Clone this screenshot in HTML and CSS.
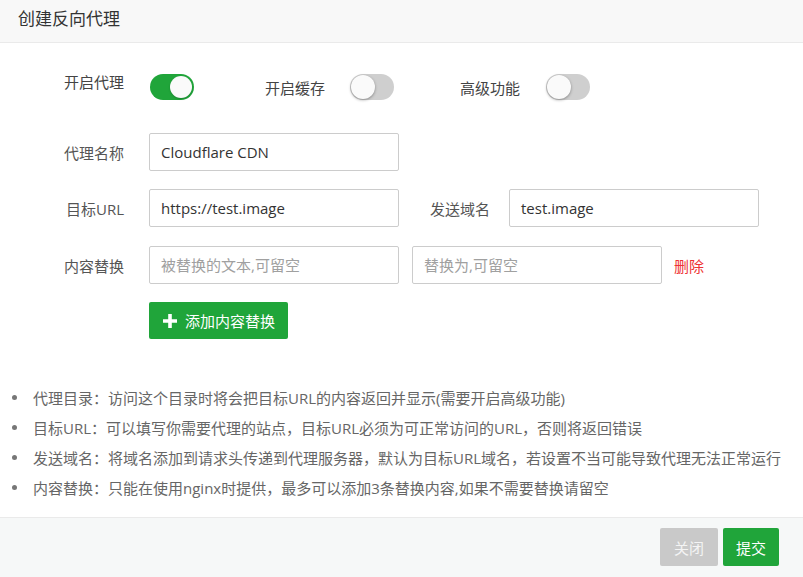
FILE: index.html
```html
<!DOCTYPE html>
<html lang="zh-CN">
<head>
<meta charset="utf-8">
<title>创建反向代理</title>
<link rel="stylesheet" href="styles.css">
</head>
<body>
<div class="dialog">
  <div class="header">创建反向代理</div>
  <div class="content">
    <div class="switch-row">
      <div class="sw-group g1">
        <span class="sw-label top">开启代理</span>
        <span class="toggle on"><span class="knob"></span></span>
      </div>
      <div class="sw-group g2">
        <span class="sw-label">开启缓存</span>
        <span class="toggle"><span class="knob"></span></span>
      </div>
      <div class="sw-group g3">
        <span class="sw-label">高级功能</span>
        <span class="toggle"><span class="knob"></span></span>
      </div>
    </div>
    <div class="form">
      <div class="row">
        <span class="label">代理名称</span>
        <div class="input">Cloudflare CDN</div>
      </div>
      <div class="row">
        <span class="label">目标URL</span>
        <div class="input">https://test.image</div>
        <span class="label2">发送域名</span>
        <div class="input">test.image</div>
      </div>
      <div class="row third">
        <span class="label">内容替换</span>
        <div class="input ph">被替换的文本,可留空</div>
        <div class="input ph second">替换为,可留空</div>
        <span class="del">删除</span>
      </div>
      <div class="row btn-row">
        <button class="add-btn"><svg class="plus" width="14" height="14" viewBox="0 0 14 14"><path d="M5.2 0h3.6v5.2H14v3.6H8.8V14H5.2V8.8H0V5.2h5.2z" fill="#fff"/></svg>添加内容替换</button>
      </div>
    </div>
    <ul class="tips">
      <li><span class="dot"></span>代理目录：访问这个目录时将会把目标URL的内容返回并显示(需要开启高级功能)</li>
      <li><span class="dot"></span>目标URL：可以填写你需要代理的站点，目标URL必须为可正常访问的URL，否则将返回错误</li>
      <li><span class="dot"></span>发送域名：将域名添加到请求头传递到代理服务器，默认为目标URL域名，若设置不当可能导致代理无法正常运行</li>
      <li><span class="dot"></span>内容替换：只能在使用nginx时提供，最多可以添加3条替换内容,如果不需要替换请留空</li>
    </ul>
  </div>
  <div class="footer">
    <button class="btn close">关闭</button>
    <button class="btn submit">提交</button>
  </div>
</div>
</body>
</html>
```
FILE: styles.css
```css
* { box-sizing: border-box; }
html, body { margin: 0; padding: 0; background: #fff; }
body {
  font-family: "Open Sans", "Noto Sans CJK SC", sans-serif;
  font-size: 15px;
  color: #555;
}
.dialog {
  width: 803px;
  height: 577px;
  display: flex;
  flex-direction: column;
  overflow: hidden;
}
.header {
  height: 43px;
  background: #f8f8f8;
  border-bottom: 1px solid #eaeaea;
  padding-left: 18px;
  font-size: 17px;
  line-height: 37px;
  color: #333;
}
.content {
  flex: 1;
  padding-top: 31px;
}
.switch-row {
  display: flex;
  height: 26px;
}
.sw-group {
  display: flex;
  align-items: center;
  gap: 25px;
}
.g1 { width: 265px; align-items: flex-start; }
.g1 .sw-label { width: 124px; text-align: right; line-height: 18px; margin-top: -1px; }
.g1 .toggle { margin-left: 1px; }
.g2 { width: 195px; }
.g3 .toggle { margin-left: 1px; }
.sw-label { color: #444; line-height: 26px; margin-top: 2px; }
.toggle {
  width: 44px;
  height: 26px;
  border-radius: 13px;
  background: #cfcfcf;
  display: flex;
  align-items: center;
  padding: 0 1px;
}
.toggle .knob {
  width: 24px;
  height: 24px;
  border-radius: 50%;
  background: #fafafa;
  box-shadow: 0 1px 3px rgba(0,0,0,0.35);
}
.toggle.on {
  background: #20a53a;
  justify-content: flex-end;
  padding: 0 2px;
}
.toggle.on .knob {
  width: 22px;
  height: 22px;
  box-shadow: 0 1px 2px rgba(0,0,0,0.2);
}
.form {
  margin-top: 33px;
  display: flex;
  flex-direction: column;
  gap: 18px;
}
.row {
  display: flex;
  align-items: center;
  height: 38px;
}
.row.third { margin-top: 1px; }
.label {
  width: 124px;
  margin-right: 25px;
  text-align: right;
  color: #555;
}
.label2 {
  width: 110px;
  padding-right: 19px;
  text-align: right;
  color: #555;
}
.input {
  width: 250px;
  height: 38px;
  border: 1px solid #ccc;
  border-radius: 2px;
  padding-left: 11px;
  line-height: 36px;
  color: #333;
  background: #fff;
}
.input.ph { color: #a0a0a0; }
.input.second { margin-left: 13px; }
.del {
  margin-left: 12px;
  color: #e33;
}
.btn-row { padding-left: 149px; height: 37px; }
.add-btn {
  width: 139px;
  height: 37px;
  border: none;
  border-radius: 2px;
  background: #20a53a;
  color: #fff;
  font-family: inherit;
  font-size: 15px;
  display: flex;
  align-items: center;
  padding: 0 0 0 14px;
  gap: 8px;
}
.plus { flex: none; }
.tips {
  list-style: none;
  margin: 43px 0 0;
  padding: 0;
  color: #666;
  font-size: 15px;
}
.tips li {
  display: flex;
  align-items: center;
  height: 30px;
  white-space: nowrap;
}
.dot {
  width: 5px;
  height: 5px;
  border-radius: 50%;
  background: #777;
  margin-left: 12px;
  margin-right: 16px;
  flex: none;
}
.footer {
  height: 60px;
  border-top: 1px solid #eaeaea;
  background: #f6f8f8;
  display: flex;
  justify-content: flex-end;
  align-items: flex-start;
  padding: 10px 24px 0 0;
  gap: 5px;
}
.btn {
  height: 38px;
  border: none;
  border-radius: 2px;
  color: #fff;
  font-family: inherit;
  font-size: 15px;
  padding: 0;
}
.btn.close { width: 58px; background: #c9c9c9; color: #f4f4f4; }
.btn.submit { width: 56px; background: #20a53a; }
```
